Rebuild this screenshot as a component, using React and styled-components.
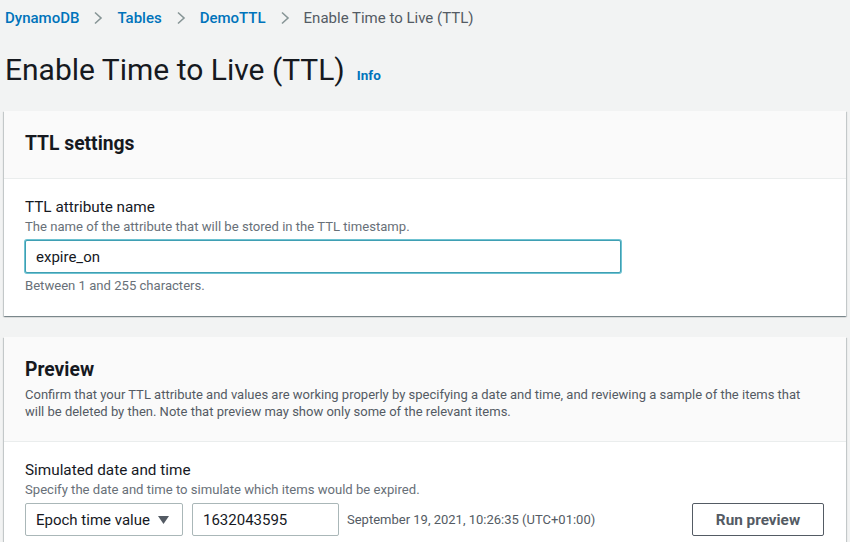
import React from 'react';
import styled, { createGlobalStyle } from 'styled-components';

const GlobalStyle = createGlobalStyle`
  html, body {
    margin: 0;
    padding: 0;
    background: #f2f3f3;
    font-family: Roboto, 'Liberation Sans', Arial, sans-serif;
    color: #16191f;
  }
`;

const Page = styled.div`
  padding: 7px 4px 0 4px;
  display: flex;
  flex-direction: column;
`;

const Breadcrumbs = styled.nav`
  display: flex;
  align-items: center;
  padding-left: 1px;
  font-size: 15px;
  line-height: 22px;
`;

const Crumb = styled.a`
  color: ${({ current }) => (current ? '#545b64' : '#0073bb')};
  text-decoration: none;
  font-weight: ${({ current }) => (current ? 400 : 500)};
`;

const Chevron = styled.svg`
  width: 12px;
  height: 14px;
  margin: 0 13px 0 13px;
  flex: none;
`;

const TitleRow = styled.div`
  display: flex;
  align-items: baseline;
  gap: 12px;
  margin-top: 23px;
  padding-left: 1px;
`;

const Title = styled.h1`
  margin: 0;
  font-size: 30px;
  line-height: 36px;
  font-weight: 400;
  color: #16191f;
`;

const InfoLink = styled.a`
  color: #0073bb;
  font-size: 13.5px;
  font-weight: 700;
  text-decoration: none;
`;

const Card = styled.section`
  background: #fff;
  margin-top: ${({ first }) => (first ? '23px' : '21px')};
  box-shadow: 0 1px 1px 0 rgba(0, 28, 36, 0.3), 1px 1px 1px 0 rgba(0, 28, 36, 0.15),
    -1px 1px 1px 0 rgba(0, 28, 36, 0.15);
`;

const CardHeader = styled.header`
  background: #fafafa;
  border-bottom: 1px solid #eaeded;
  padding: 20px 20px 21px 21px;
`;

const CardTitle = styled.h2`
  margin: 0;
  font-size: 19.3px;
  line-height: 26px;
  font-weight: 700;
`;

const CardDescription = styled.p`
  margin: 3px 0 0 0;
  max-width: 785px;
  font-size: 13px;
  line-height: 17px;
  color: #545b64;
`;

const CardBody = styled.div`
  padding: 18px 21px 21px 21px;
`;

const Label = styled.div`
  font-size: 15.3px;
  line-height: 20px;
`;

const Hint = styled.div`
  font-size: 13.1px;
  line-height: 18px;
  color: #687078;
  margin-top: ${({ below }) => (below ? '4px' : '1px')};
`;

const TextInput = styled.input`
  box-sizing: border-box;
  display: block;
  width: ${({ w }) => w}px;
  height: 33px;
  margin-top: ${({ inline }) => (inline ? '0' : '4px')};
  padding: 0 10px;
  font-family: inherit;
  font-size: 15px;
  color: #16191f;
  background: #fff;
  border: 1px solid ${({ focused }) => (focused ? '#3f9fb3' : '#aab7b8')};
  box-shadow: ${({ focused }) => (focused ? '0 0 0 1px #6fc3d2' : 'none')};
  border-radius: 2px;
  outline: none;
`;

const ControlRow = styled.div`
  display: flex;
  align-items: center;
  margin-top: 4px;
`;

const Select = styled.div`
  box-sizing: border-box;
  width: 158px;
  height: 33px;
  display: flex;
  align-items: center;
  justify-content: space-between;
  padding: 0 13px 0 10px;
  border: 1px solid #aab7b8;
  border-radius: 2px;
  font-size: 15px;
  margin-right: 9px;
`;

const DateText = styled.span`
  font-size: 13px;
  color: #545b64;
  margin-left: 8px;
`;

const Button = styled.button`
  margin-left: auto;
  width: 132px;
  height: 33px;
  background: #fff;
  border: 1px solid #545b64;
  border-radius: 2px;
  font-family: inherit;
  font-size: 15.3px;
  font-weight: 700;
  color: #545b64;
  margin-right: 1px;
`;

const ChevronIcon = () => (
  <Chevron viewBox="0 0 12 14">
    <path d="M3 1.5 L9 7 L3 12.5" fill="none" stroke="#879596" strokeWidth="1.6" />
  </Chevron>
);

const Caret = () => (
  <svg width="11" height="8" viewBox="0 0 11 8">
    <path d="M0 0 H11 L5.5 8 Z" fill="#545b64" />
  </svg>
);

const crumbs = ['DynamoDB', 'Tables', 'DemoTTL'];

export default function App() {
  return (
    <>
      <GlobalStyle />
      <Page>
        <Breadcrumbs>
          {crumbs.map((c) => (
            <React.Fragment key={c}>
              <Crumb href="#">{c}</Crumb>
              <ChevronIcon />
            </React.Fragment>
          ))}
          <Crumb current>Enable Time to Live (TTL)</Crumb>
        </Breadcrumbs>

        <TitleRow>
          <Title>Enable Time to Live (TTL)</Title>
          <InfoLink href="#">Info</InfoLink>
        </TitleRow>

        <Card first>
          <CardHeader>
            <CardTitle>TTL settings</CardTitle>
          </CardHeader>
          <CardBody>
            <Label>TTL attribute name</Label>
            <Hint>The name of the attribute that will be stored in the TTL timestamp.</Hint>
            <TextInput w={596} focused defaultValue="expire_on" />
            <Hint below>Between 1 and 255 characters.</Hint>
          </CardBody>
        </Card>

        <Card>
          <CardHeader>
            <CardTitle>Preview</CardTitle>
            <CardDescription>
              Confirm that your TTL attribute and values are working properly by specifying a date and
              time, and reviewing a sample of the items that will be deleted by then. Note that preview
              may show only some of the relevant items.
            </CardDescription>
          </CardHeader>
          <CardBody>
            <Label>Simulated date and time</Label>
            <Hint>Specify the date and time to simulate which items would be expired.</Hint>
            <ControlRow>
              <Select>
                <span>Epoch time value</span>
                <Caret />
              </Select>
              <TextInput w={147} inline defaultValue="1632043595" />
              <DateText>September 19, 2021, 10:26:35 (UTC+01:00)</DateText>
              <Button>Run preview</Button>
            </ControlRow>
          </CardBody>
        </Card>
      </Page>
    </>
  );
}
